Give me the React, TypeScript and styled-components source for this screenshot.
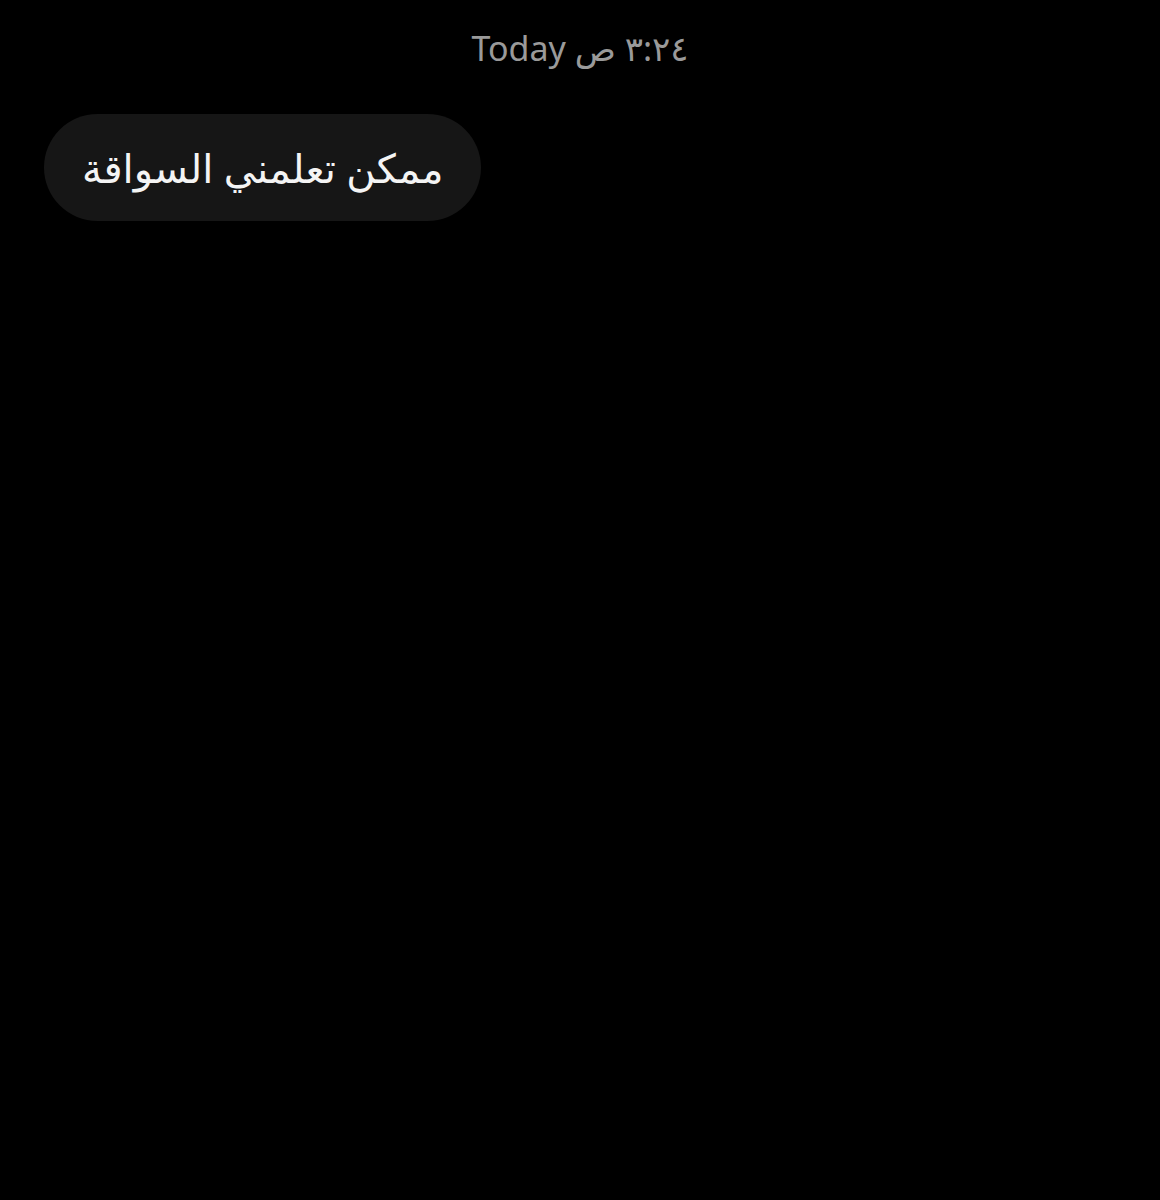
import React from 'react';
import styled, { createGlobalStyle } from 'styled-components';

const GlobalStyle = createGlobalStyle`
	html, body {
		margin: 0;
		padding: 0;
		background: #000;
	}
	body {
		font-family: 'Noto Sans', 'DejaVu Sans', sans-serif;
	}
`;

const Screen = styled.div`
	display: flex;
	flex-direction: column;
	width: 1160px;
	height: 1200px;
	background: #000;
	box-sizing: border-box;
	padding: 24px 44px 0;
`;

const Stamp = styled.div`
	align-self: center;
	color: #9a9a9a;
	font-size: 34px;
	line-height: 48px;
	direction: ltr;
`;

const Bubble = styled.div`
	align-self: flex-start;
	margin-top: 42px;
	padding: 0 38px;
	height: 107px;
	display: flex;
	align-items: center;
	background: #161616;
	border-radius: 54px;
	color: #f4f4f4;
	font-size: 40px;
	direction: rtl;
`;

export default function App() {
	return (
		<>
			<GlobalStyle />
			<Screen>
				<Stamp>Today ٣:٢٤ ص</Stamp>
				<Bubble>ممكن تعلمني السواقة</Bubble>
			</Screen>
		</>
	);
}
